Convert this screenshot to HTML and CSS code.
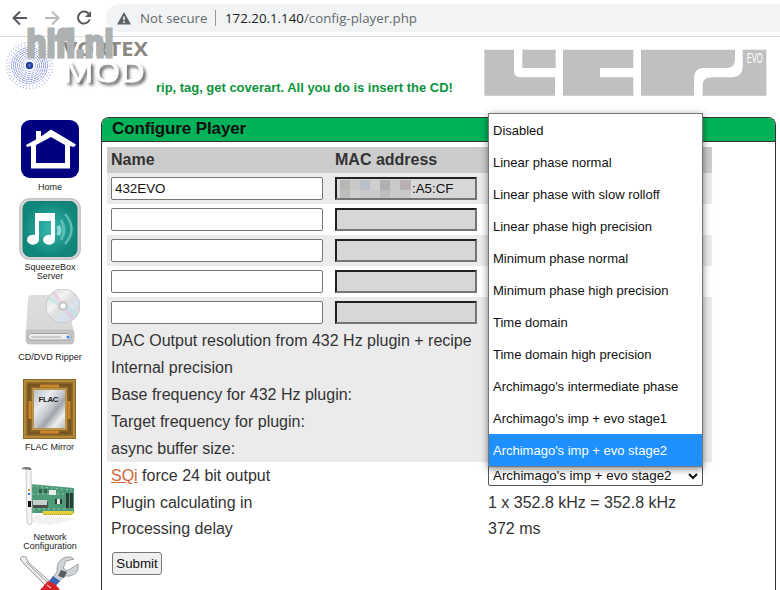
FILE: index.html
```html
<!DOCTYPE html>
<html lang="en">
<head>
<meta charset="utf-8">
<title>Configure Player</title>
<link rel="stylesheet" href="styles.css">
</head>
<body>
<div class="toolbar">
  <svg class="nav" width="106" height="36" viewBox="0 0 106 36" fill="none" stroke-width="2">
    <path d="M27 18H14M20 11.5L13.5 18L20 24.500" stroke="#55585c"/>
    <path d="M45 18H58M52 11.500L58.500 18L52 24.500" stroke="#bbb"/>
    <path d="M88.500 13.500A6 6 0 1 0 89.700 19.500" stroke="#55585c"/>
    <path d="M91 11V17H85Z" fill="#55585c"/>
  </svg>
  <div class="address">
    <svg class="warn" width="14" height="13" viewBox="0 0 14 13"><path d="M7 0L14 12.500H0Z" fill="#5f6368"/><path d="M7 4.500V8M7 9.300V11" stroke="#fff" stroke-width="1.500"/></svg>
    <span class="secure">Not secure</span>
    <span class="divider"></span>
    <span class="url"><b>172.20.1.140</b>/config-player.php</span>
  </div>
</div>

<header class="header">
  <svg class="brand" width="156" height="80" viewBox="0 37 156 80">
    <defs><filter id="sh" x="-10%" y="-20%" width="130%" height="160%"><feDropShadow dx="2.500" dy="3" stdDeviation="1.800" flood-color="#333" flood-opacity=".8"/></filter></defs>
    <g fill="none" stroke="#4059bd">
      <circle cx="29.500" cy="65.500" r="23" stroke-width="1.600" stroke-dasharray="1 2.200" opacity=".4"/>
      <circle cx="29.500" cy="65.500" r="20.500" stroke-width="1.400" stroke-dasharray="1 2.500" opacity=".45"/>
      <g stroke-dasharray="3 .7">
      <circle cx="29.500" cy="65.500" r="18" opacity=".55"/>
      <circle cx="29.500" cy="65.500" r="16" opacity=".65"/>
      <circle cx="29.500" cy="65.500" r="14" opacity=".65"/>
      <circle cx="29.500" cy="65.500" r="12" opacity=".6"/>
      <circle cx="29.500" cy="65.500" r="10" opacity=".55"/>
      <circle cx="29.500" cy="65.500" r="8" opacity=".5"/>
      <circle cx="29.500" cy="65.500" r="6" opacity=".4"/>
      </g>
      <circle cx="29.500" cy="65.500" r="2.500" stroke-width="2.500" stroke="#2742a0" fill="#7186cf"/>
    </g>
    <text class="vortex" x="63" y="56" textLength="85" lengthAdjust="spacingAndGlyphs">VORTEX</text>
    <text class="mod" x="63" y="82" textLength="82" lengthAdjust="spacingAndGlyphs" filter="url(#sh)">MOD</text>
    <text class="watermark" x="26.500" y="56.500" textLength="87" lengthAdjust="spacingAndGlyphs">hifi.nl</text>
  </svg>
  <p class="tagline">rip, tag, get coverart. All you do is insert the CD!</p>
  <svg class="evo" width="284" height="48" viewBox="42 58 852 144">
    <g fill="#c0c0c0">
      <path d="M43 60H132V125Q132 143 152 143H255V198H43Z"/>
      <path d="M157 60H257V115H157Z"/>
      <path d="M279 60H490V115H390V143H490V198H279Z"/>
      <path d="M513 60H795V88Q795 115 767 115H696Q672 118 672 145V198H513Z"/>
      <path d="M818 60H889V198H698V167Q698 143 724 143H789Q818 140 818 110Z"/>
    </g>
    <text x="830" y="101" textLength="48" lengthAdjust="spacingAndGlyphs">EVO</text>
  </svg>
</header>

<div class="layout">
<nav class="side">
  <a class="item home">
    <svg width="58" height="58" viewBox="0 0 58 58"><rect width="58" height="58" rx="9" fill="#000080"/><path d="M15 11H20V16.500L30 9.500L55 24.500L53 27L49 26V48.500H10V26L6 27L5 25L15 19.500ZM15 25V43H44V25L30 17Z" fill="#fff" fill-rule="evenodd"/></svg>
    <span>Home</span>
  </a>
  <a class="item squeeze">
    <svg width="62" height="62" viewBox="0 0 62 62"><defs><radialGradient id="teal"><stop offset="0" stop-color="#35b9af"/><stop offset="1" stop-color="#108579"/></radialGradient></defs><rect width="62" height="62" rx="11" fill="#c4c4c4"/><rect x="1.500" y="1.500" width="59" height="59" rx="9.500" fill="#d6d6d6"/><rect x="4" y="3.500" width="54" height="55" rx="7" fill="url(#teal)" stroke="#147d73"/><path d="M16 15H36V41A6 5 0 1 1 32 37V23H20V42A6 5 0 1 1 16 37Z" fill="#fff"/><g fill="none" stroke="#a7e5df"><path d="M39 28Q42 32 39 37" stroke-width="4" opacity=".8"/><path d="M42 22Q48 32 42 42" stroke-width="3" opacity=".45"/><path d="M46 16Q59 31 46 46" stroke-width="2.500" opacity=".5"/></g></svg>
    <span>SqueezeBox<br>Server</span>
  </a>
  <a class="item ripper">
    <svg width="60" height="59" viewBox="0 0 60 59"><defs><linearGradient id="drv" y2="1" x2="0"><stop stop-color="#ddd"/><stop offset="1" stop-color="#d6d6d6"/></linearGradient><linearGradient id="disc" x2="1" y2="1"><stop stop-color="#d5d5d5"/><stop offset=".35" stop-color="#f3f3f3"/><stop offset=".5" stop-color="#ddd"/><stop offset=".65" stop-color="#d9e2ee"/><stop offset="1" stop-color="#d5d5d5"/></linearGradient></defs><path d="M8 9Q8 6 12 6H42Q46 6 46 9L54 43V51Q54 55 50 55H10Q6 55 6 51V43Z" fill="url(#drv)"/><path d="M6 43Q6 41 9 41H51Q54 41 54 43V51Q54 55 50 55H10Q6 55 6 51Z" fill="#c5c5c5" stroke="#b5b5b5" stroke-width=".6"/><rect x="8" y="44.500" width="43" height="6.500" rx="3.200" fill="#ededed" stroke="#a0a0a0"/><path d="M11 48H41" stroke="#aaa"/><circle cx="48" cy="48" r="1.500" fill="#3585ea"/><circle cx="43" cy="17" r="17" fill="url(#disc)" stroke="#c9c9c9"/><g stroke-width="4" opacity=".6"><path d="M39 15L29 9M47 19L57 26" stroke="#b6e5dc"/><path d="M40 13L34 4M46 21L53 30" stroke="#e8c3e5"/></g><circle cx="43" cy="17" r="5" fill="#c9c9c9"/><circle cx="43" cy="17" r="2.500" fill="#fff"/></svg>
    <span>CD/DVD Ripper</span>
  </a>
  <a class="item mirror">
    <svg width="53" height="60" viewBox="0 0 53 60"><defs><linearGradient id="glass" x2="1" y2="1"><stop stop-color="#b7c0ca"/><stop offset=".3" stop-color="#e8ebee"/><stop offset=".5" stop-color="#c5c8cc"/><stop offset=".62" stop-color="#a0a4aa"/><stop offset=".8" stop-color="#eee"/><stop offset="1" stop-color="#bcbcbc"/></linearGradient></defs><rect width="53" height="60" fill="#8f6824"/><rect x="2" y="2" width="49" height="56" fill="none" stroke="#b18a3c" stroke-width="2"/><rect x="6" y="6" width="41" height="48" fill="none" stroke="#765320" stroke-width="3"/><rect x="4" y="4" width="45" height="52" fill="none" stroke="#a57b31" stroke-dasharray="1 2"/><path d="M17 7H36M17 53H36M7 22V40M46 22V40" stroke="#c9862a" stroke-width="3"/><rect x="9" y="9" width="35" height="42" fill="#bb934c"/><rect x="11" y="11" width="31" height="38" fill="url(#glass)"/><text x="15.500" y="23" textLength="20">FLAC</text></svg>
    <span>FLAC Mirror</span>
  </a>
  <a class="item network">
    <svg width="56" height="64" viewBox="0 0 56 64"><path d="M14 50L54 54L28 60L8 57Z" fill="#f1f1f1"/><path d="M8 19L52 23V48H8Z" fill="#4e9a78"/><path d="M9 21L50 25M10 29H44M11 44H43" stroke="#9ac9b1" stroke-dasharray="2 3"/><path d="M21 46H51V50H21Z" fill="#e2ce3e"/><path d="M22 49.500H50" stroke="#a59029" stroke-dasharray="1 1"/><path d="M10 37H26V43H11Z" fill="#4a4f4b"/><path d="M11 35H25V40H11Z" fill="#c7cfca"/><path d="M33 34H40V39H33ZM44 28H47V43H44ZM48 28H51V43H48Z" fill="#273f37"/><path d="M17 24H20V28H17ZM22 24H25V28H22Z" fill="#365e4b"/><path d="M27 25H34V30H27ZM35 34H38V39H35Z" fill="#e7eee9"/><path d="M4 3H9L10 58L8 60L5 58Z" fill="#f4f4f4" stroke="#ccc"/><path d="M0 3Q4 1 9 3V5L0 4Z" fill="#777"/><path d="M6 36H9V42H6Z" fill="#111"/><path d="M6 24H8V26H6Z" fill="#bb9c25"/><path d="M6 28H8V30H6Z" fill="#2878c1"/></svg>
    <span>Network<br>Configuration</span>
  </a>
  <a class="item tools">
    <svg width="60" height="34" viewBox="0 0 60 34"><path d="M0 3Q1 0 5 0L9 7L33 28L29 33L6 10Z" fill="#ededed" stroke="#999"/><path d="M6 6L30 29" stroke="#999"/><path d="M54 3L46 5L43 12L47 15L55 10L58 8Q60 17 50 20H44L33 32H24L37 16Q36 4 46 1Q52 0 54 3Z" fill="#d1d4d6" stroke="#a0a4a7"/><path d="M41 14L47 16L44 22L38 20Z" fill="#5a5e61"/><path d="M33 20L40 25L32 34H23Z" fill="#3865b5"/><path d="M28 25L35 28L40 34H20Z" fill="#d52127"/><path d="M27 29L31 32" stroke="#fff"/></svg>
  </a>
</nav>

<main class="panel">
  <h1>Configure Player</h1>
  <div class="table">
    <div class="row head"><span>Name</span><span>MAC address</span></div>
    <div class="row player odd"><span class="name">432EVO</span><span class="mac"><svg width="71" height="18" viewBox="0 0 71 18"><path d="M0 0H71V18H0Z" fill="#c9c9c9"/><path d="M0 0H10V10H0Z" fill="#b9b7b4"/><path d="M20 0H30V10H20Z" fill="#b9c0c9"/><path d="M40 0H50V10H40Z" fill="#b0b0b2"/><path d="M60 0H71V10H60Z" fill="#b8b0b4"/><path d="M0 10H10V18H0ZM40 10H50V18H40Z" fill="#bdbdbd"/><path d="M30 0H40V10H30ZM10 10H20V18H10Z" fill="#cfcfcf"/></svg>:A5:CF</span></div>
    <div class="row player"><span class="name"></span><span class="mac"></span></div>
    <div class="row player odd"><span class="name"></span><span class="mac"></span></div>
    <div class="row player"><span class="name"></span><span class="mac"></span></div>
    <div class="row player odd"><span class="name"></span><span class="mac"></span></div>
    <div class="row setting odd"><span>DAC Output resolution from 432 Hz plugin + recipe</span></div>
    <div class="row setting odd"><span>Internal precision</span></div>
    <div class="row setting odd"><span>Base frequency for 432 Hz plugin:</span></div>
    <div class="row setting odd"><span>Target frequency for plugin:</span></div>
    <div class="row setting odd"><span>async buffer size:</span></div>
    <div class="row setting"><span><a class="link">SQi</a> force 24 bit output</span>
      <div class="select"><span>Archimago's imp + evo stage2</span><svg width="10" height="7" viewBox="0 0 10 7"><path d="M1 1L5 5L9 1" fill="none" stroke="#111" stroke-width="2"/></svg>
        <ul class="menu">
          <li>Disabled</li>
          <li>Linear phase normal</li>
          <li>Linear phase with slow rolloff</li>
          <li>Linear phase high precision</li>
          <li>Minimum phase normal</li>
          <li>Minimum phase high precision</li>
          <li>Time domain</li>
          <li>Time domain high precision</li>
          <li>Archimago's intermediate phase</li>
          <li>Archimago's imp + evo stage1</li>
          <li class="selected">Archimago's imp + evo stage2</li>
        </ul>
      </div>
    </div>
    <div class="row setting"><span>Plugin calculating in</span><span>1 x 352.8 kHz = 352.8 kHz</span></div>
    <div class="row setting last"><span>Processing delay</span><span>372 ms</span></div>
  </div>
  <button class="submit">Submit</button>
</main>
</div>
</body>
</html>
```
FILE: styles.css
```css
* { box-sizing: border-box; }
html, body { height: 590px; overflow: hidden; }
body { margin: 0; background: #fff; color: #333; font: 16px "Liberation Sans", Arial, sans-serif; }
svg { display: block; flex: none; }

.toolbar { display: flex; height: 37px; border-bottom: 1px solid #dadce0; font: 13.3px "Open Sans", "Noto Sans", sans-serif; }
.address { display: flex; flex: 1; align-items: center; height: 28px; margin-top: 4px; padding-left: 11px; border-radius: 14px 0 0 14px; background: #f1f3f4; color: #666a6e; white-space: nowrap; }
.secure { width: 68px; margin-left: 9px; }
.divider { width: 1px; height: 16px; margin: 0 9px 0 7px; background: #999; }
.url b { color: #222; font-weight: 400; }

.header { display: flex; height: 80px; }
.brand { overflow: visible; }
.brand text { font-family: "Open Sans", sans-serif; }
.brand .vortex { font-size: 19.5px; font-weight: 700; fill: #8a8880; }
.brand .mod { font-size: 28px; fill: #fff; stroke: #fff; stroke-width: .5px; }
.brand .watermark { font: 700 39px "Liberation Sans", sans-serif; fill: #aeb1b1; stroke: #aeb1b1; stroke-width: 3.2px; }
.tagline { width: 328px; margin: 42px 0 0; color: #0b943b; font-size: 13px; line-height: 17px; letter-spacing: -.02px; font-weight: 700; white-space: nowrap; }
.evo { margin-top: 12px; }
.evo text { font: 400 42px "Liberation Sans", sans-serif; fill: #fff; }

.layout { display: flex; height: 473px; }
.side { display: flex; flex-direction: column; width: 101px; padding-top: 3px; overflow: hidden; }
.item { display: flex; flex: none; flex-direction: column; align-items: center; padding-right: 1px; color: #222; font-size: 9px; line-height: 9px; text-align: center; }
.item span { margin-top: 5px; }
.home { height: 78px; }
.squeeze { height: 91px; }
.squeeze span { margin-top: 3px; }
.ripper { height: 90px; }
.mirror { height: 86px; padding-right: 2px; }
.mirror span { margin-top: 4px; }
.mirror text { font-size: 8px; font-weight: 700; fill: #222; }
.network { height: 91px; }
.network span { margin-top: 4px; }

.panel { width: 675px; height: 473px; border: 1px solid #333; border-bottom: 0; border-radius: 8px 8px 0 0; }
h1 { height: 24px; margin: 0; padding-left: 10px; border-bottom: 1px solid #333; border-radius: 7px 7px 0 0; background: #00b258; color: #111; font-size: 17px; line-height: 21px; letter-spacing: -.12px; }
.table { width: 605px; margin: 5px 0 0 5px; }
.row { display: grid; grid-template-columns: 224px 153px 224px; padding-left: 4px; }
.odd { background: #ebebeb; }
.head { height: 26px; background: #ccc; font-weight: 700; line-height: 25px; }
.player { height: 31px; padding-top: 4px; color: #111; font-size: 13.333px; line-height: 21px; }
.player:nth-child(6) { height: 30px; }
.name { width: 212px; height: 23px; padding-left: 3px; border: 1px solid #767676; border-radius: 2px; background: #fff; }
.mac { display: flex; gap: 1px; align-items: center; width: 142px; height: 23px; padding-left: 3px; border: 2px solid; border-color: #202020 #757575 #757575 #202020; background: #d7d7d7; }
.setting { grid-template-columns: 377px 224px; height: 27px; line-height: 27px; white-space: nowrap; }
.last { line-height: 26px; }
.link { color: #c63; text-decoration: underline; }
.select { position: relative; display: flex; justify-content: space-between; align-items: center; width: 215px; height: 20px; margin-top: 4px; padding: 0 4px; border: 1px solid #555; border-radius: 2px; background: #fff; color: #111; font-size: 13.333px; line-height: 18px; }
.menu { position: absolute; left: -1px; bottom: 18px; width: 215px; margin: 0; padding: 0; border: 1px solid #777; background: #fff; box-shadow: 0 2px 7px rgba(0, 0, 0, .5); color: #111; font-size: 13px; line-height: 34px; list-style: none; }
.menu li { height: 32px; padding-left: 4px; }
.menu .selected { background: #1e90ff; color: #fff; }
.submit { display: block; width: 50px; height: 23px; margin: 9px 0 0 10px; padding: 0; border: 1px solid #767676; border-radius: 3px; background: #efefef; color: #111; font: 13.333px "Liberation Sans", sans-serif; }
```
